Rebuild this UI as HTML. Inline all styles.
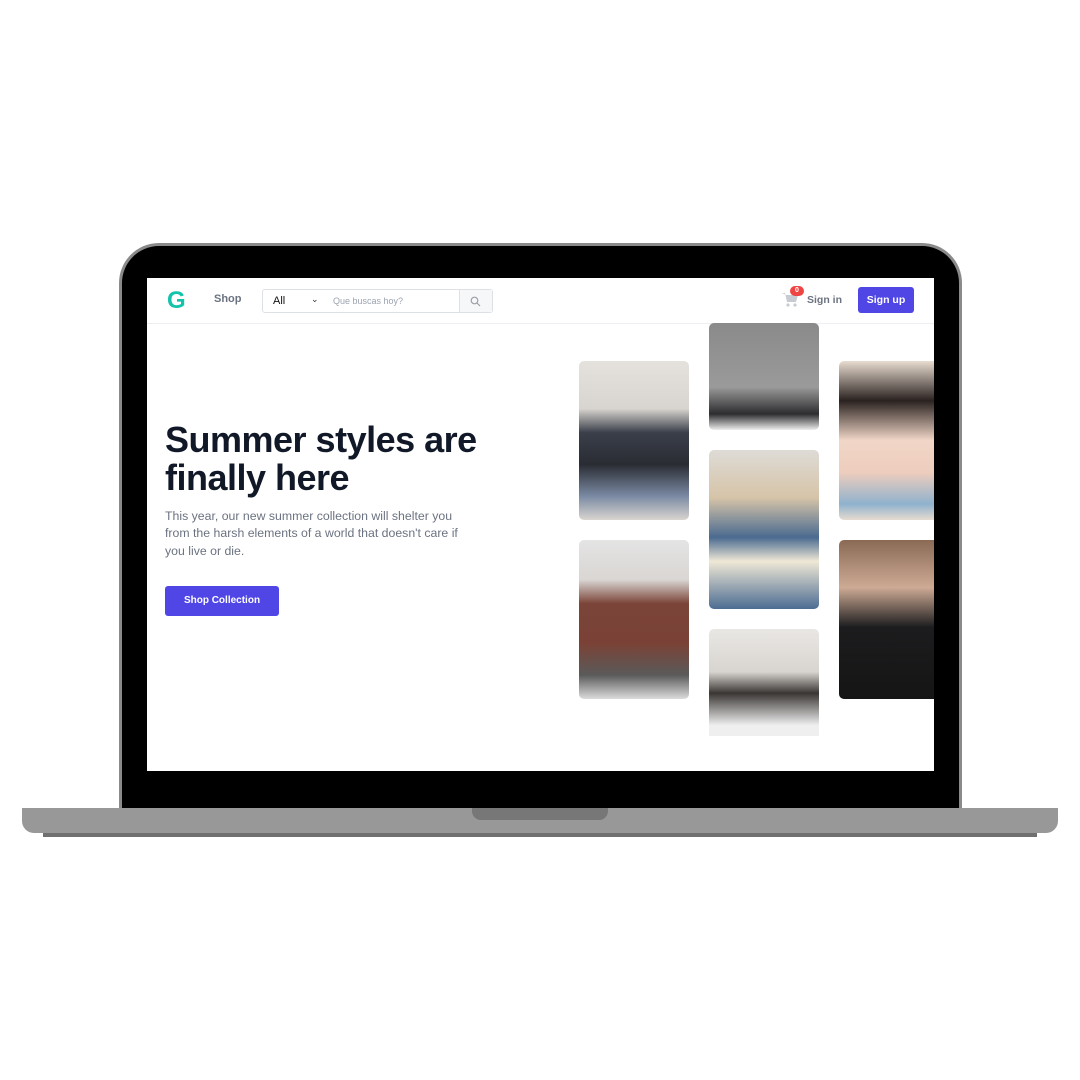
<!DOCTYPE html>
<html><head><meta charset="utf-8"><style>
*{margin:0;padding:0;box-sizing:border-box}
body{width:1080px;height:1080px;background:#fff;position:relative;overflow:hidden;font-family:"Liberation Sans",sans-serif}
.abs{position:absolute}
.bezel{left:119px;top:243px;width:843px;height:570px;background:#000;border:3px solid #8a8a8a;border-bottom:none;border-radius:40px 40px 0 0}
.screen{left:147px;top:278px;width:787px;height:493px;background:#fff;overflow:hidden}
.base{left:22px;top:808px;width:1036px;height:25px;background:#989898;border-radius:0 0 12px 12px}
.foot{left:43px;top:833px;width:994px;height:4px;background:#707070}
.notch{left:472px;top:808px;width:136px;height:12px;background:#777;border-radius:0 0 9px 9px}
.img{position:absolute;width:110px;height:159px;border-radius:5px;overflow:hidden}
</style></head><body>
<div class="abs bezel"></div>
<div class="abs screen">
 <div class="abs" style="left:0;top:0;width:787px;height:46px;border-bottom:1px solid #eceef1;background:#fff"></div>
 <div class="abs" style="left:20px;top:9px;font-size:24px;font-weight:bold;color:#14c3ab">G</div>
 <div class="abs" style="left:67px;top:15px;font-size:11px;font-weight:bold;color:#6b7280">Shop</div>
 <div class="abs" style="left:115px;top:11px;width:231px;height:24px;border:1px solid #dde1e6;border-radius:3px"></div>
 <div class="abs" style="left:126px;top:17px;font-size:11px;color:#111">All</div>
 <div class="abs" style="left:164px;top:16px;font-size:9px;color:#333">&#8964;</div>
 <div class="abs" style="left:186px;top:18px;font-size:9px;color:#9ca3af">Que buscas hoy?</div>
 <div class="abs" style="left:312px;top:12px;width:33px;height:22px;background:#f6f7f9;border-left:1px solid #dde1e6"></div>
 <svg class="abs" style="left:323px;top:18px" width="11" height="11" viewBox="0 0 11 11"><circle cx="4.5" cy="4.5" r="3.3" fill="none" stroke="#9aa0a8" stroke-width="1.2"/><path d="M7 7l3 3" stroke="#9aa0a8" stroke-width="1.2"/></svg>
 <svg class="abs" style="left:634px;top:14px" width="18" height="16" viewBox="0 0 18 16"><path d="M1 1h3l2 9h9l2-7H5" fill="#c8ccd2"/><circle cx="7" cy="13" r="1.6" fill="#c8ccd2"/><circle cx="14" cy="13" r="1.6" fill="#c8ccd2"/></svg>
 <div class="abs" style="left:643px;top:8px;width:14px;height:10px;background:#ef4444;border-radius:5px;color:#fff;font-size:7px;text-align:center;line-height:10px;font-weight:bold">0</div>
 <div class="abs" style="left:660px;top:16px;font-size:10.5px;font-weight:bold;color:#6b7280">Sign in</div>
 <div class="abs" style="left:711px;top:9px;width:56px;height:26px;background:#4f46e5;border-radius:3px;color:#fff;font-size:10.5px;font-weight:bold;text-align:center;line-height:26px">Sign up</div>
 <div class="abs" style="left:18px;top:143px;font-size:36px;font-weight:bold;color:#111827;line-height:38px;letter-spacing:-0.5px">Summer styles are<br>finally here</div>
 <div class="abs" style="left:18px;top:230px;width:305px;font-size:12.3px;color:#6b7280;line-height:17.3px">This year, our new summer collection will shelter you from the harsh elements of a world that doesn't care if you live or die.</div>
 <div class="abs" style="left:18px;top:308px;width:114px;height:30px;background:#4f46e5;border-radius:3px;color:#fff;font-size:10px;font-weight:bold;text-align:center;line-height:30px">Shop Collection</div>
 <div class="img" style="left:432px;top:83px;background:linear-gradient(180deg,#e5e2de 0%,#d8d4cf 30%,#3a3f4a 45%,#2a2c33 65%,#7a8aa3 85%,#d9d5d0 100%)"></div>
 <div class="img" style="left:432px;top:262px;background:linear-gradient(180deg,#e4e4e4 0%,#d9d6d3 25%,#7b4438 40%,#7a4236 65%,#5a5a5a 85%,#dcdcdc 100%)"></div>
 <div class="img" style="left:562px;top:45px;height:107px;background:linear-gradient(180deg,#8a8a8a 0%,#9a9a9a 60%,#2d2d30 85%,#eee 100%)"></div>
 <div class="img" style="left:562px;top:172px;background:linear-gradient(180deg,#dedbd6 0%,#d6c4a8 30%,#4a6a90 55%,#efe8d6 70%,#4c6c92 100%)"></div>
 <div class="img" style="left:562px;top:351px;height:107px;border-radius:5px 5px 0 0;background:linear-gradient(180deg,#e9e7e4 0%,#d8d5d0 40%,#3a3634 60%,#efefef 90%)"></div>
 <div class="img" style="left:692px;top:83px;width:95px;border-radius:5px 0 0 5px;background:linear-gradient(180deg,#e9dcd0 0%,#2a2220 25%,#f1d6c7 50%,#eecdbd 70%,#8fb2cd 90%,#e6dbd0 100%)"></div>
 <div class="img" style="left:692px;top:262px;width:95px;border-radius:5px 0 0 5px;background:linear-gradient(180deg,#8a6a55 0%,#cdaa94 30%,#1c1c1e 55%,#151515 100%)"></div>
</div>
<div class="abs base"></div>
<div class="abs foot"></div>
<div class="abs notch"></div>
</body></html>
